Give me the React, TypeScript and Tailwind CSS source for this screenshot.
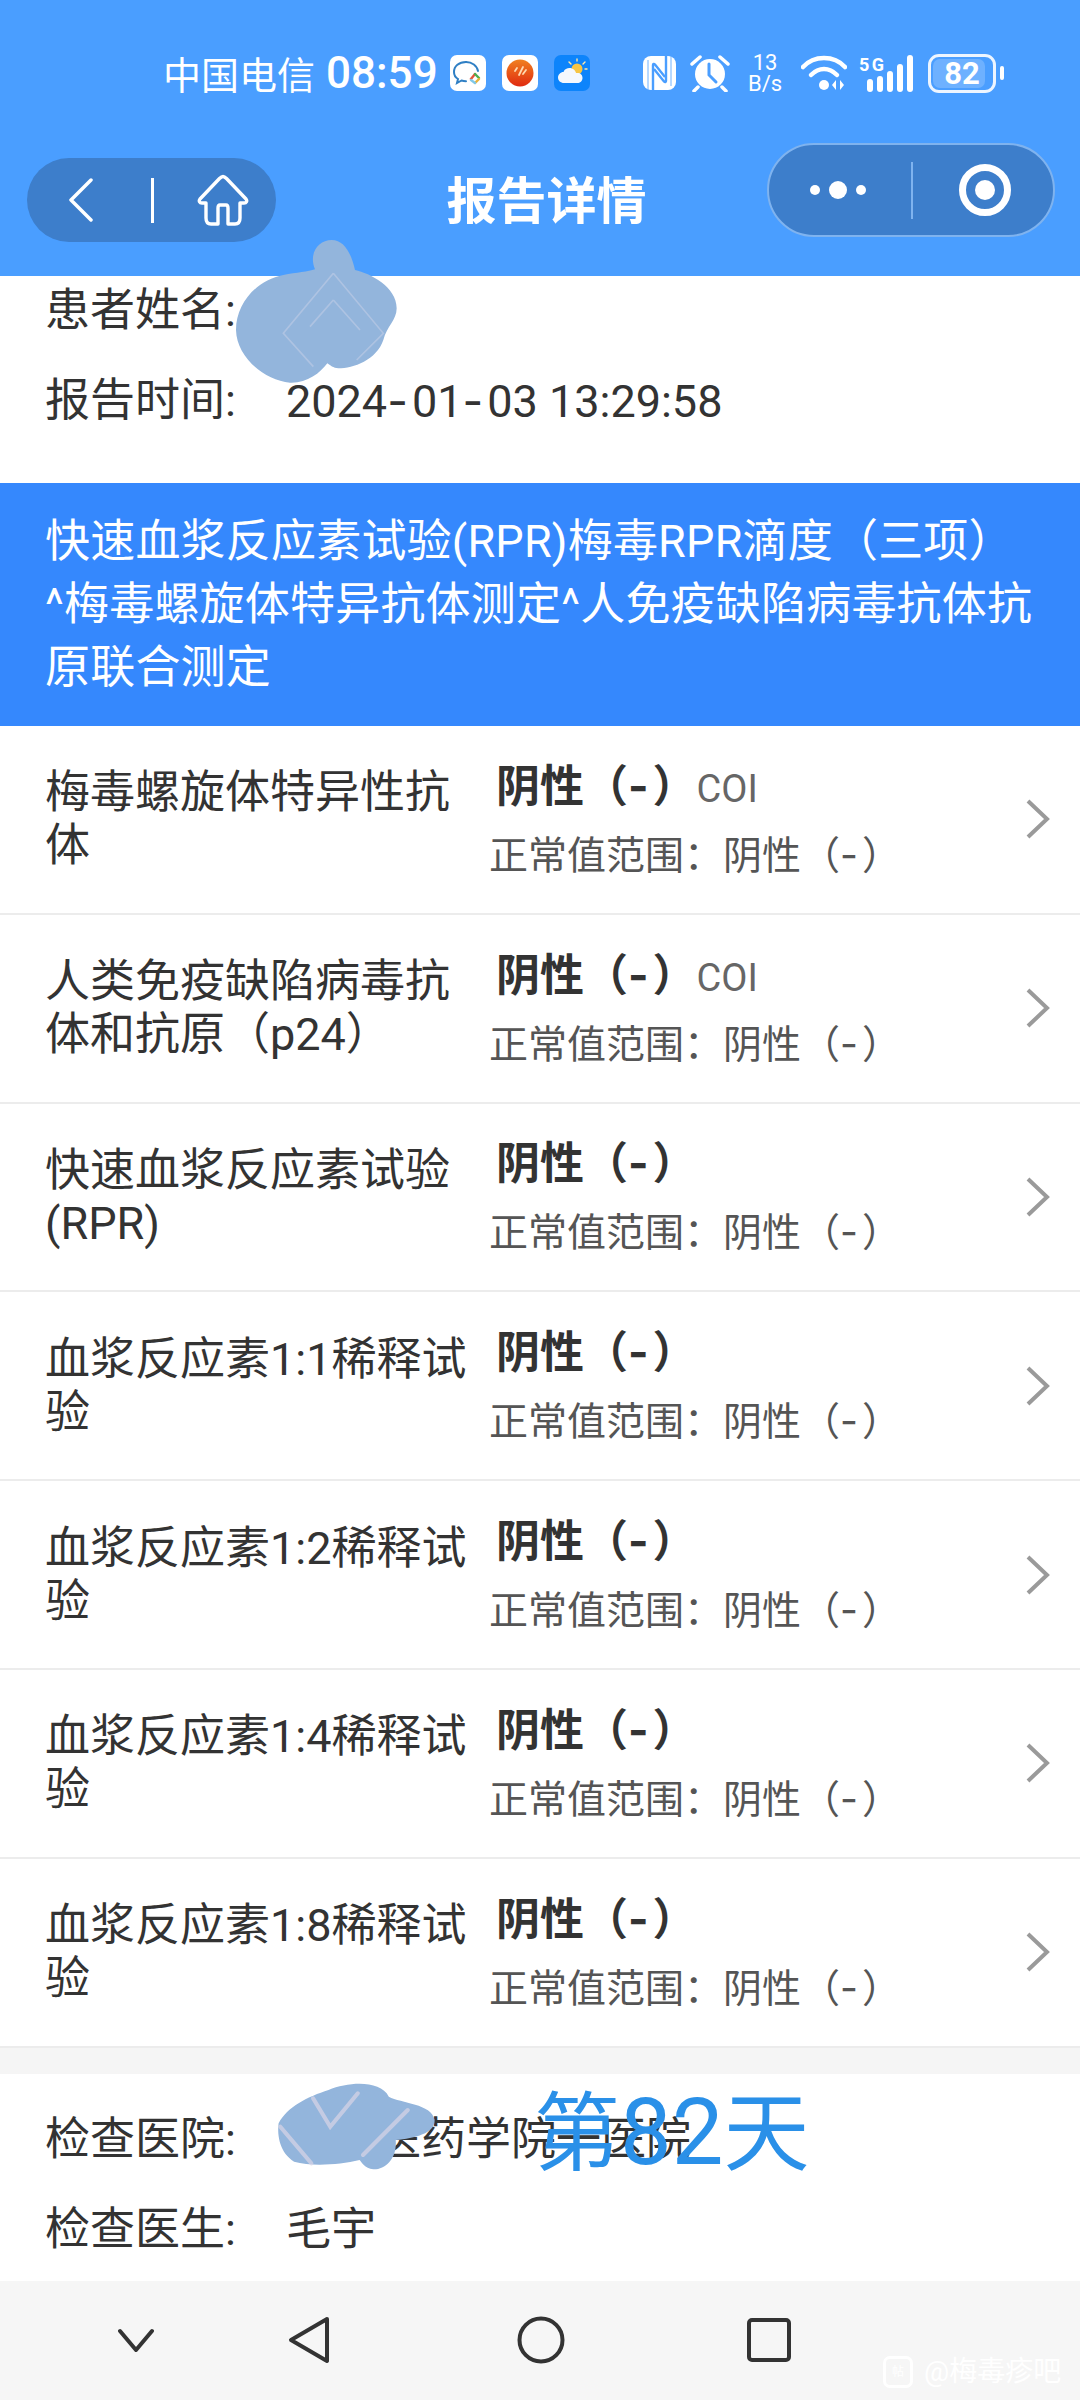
import React from "react";

const rows: { name: React.ReactNode; coi?: boolean }[] = [
  { name: "梅毒螺旋体特异性抗体", coi: true },
  { name: "人类免疫缺陷病毒抗体和抗原（p24）", coi: true },
  { name: "快速血浆反应素试验(RPR)" },
  { name: "血浆反应素1:1稀释试验" },
  { name: "血浆反应素1:2稀释试验" },
  { name: "血浆反应素1:4稀释试验" },
  { name: "血浆反应素1:8稀释试验" },
];

function MessageApp() {
  return (
    <svg viewBox="0 0 36 36" className="w-[36px] h-[36px] shrink-0">
      <rect width="36" height="36" rx="7" fill="#ffffff" />
      <path d="M16 7C9 7 4 11 4 17c0 3 1.500 5.500 4 7l-1 4 4.500-2.500c1.500.5 3 .7 4.500.7" fill="none" stroke="#2f7fc4" strokeWidth="2" strokeLinecap="round" />
      <path d="M16 7c6 0 11 3.500 12 9" fill="none" stroke="#2f7fc4" strokeWidth="2" strokeLinecap="round" />
      <path d="M21 24l4-5" stroke="#e2563d" strokeWidth="2.400" strokeLinecap="round" />
      <path d="M25 19l4 4" stroke="#4caf50" strokeWidth="2.400" strokeLinecap="round" />
      <path d="M29 24l-4 4" stroke="#e8b23a" strokeWidth="2.400" strokeLinecap="round" />
      <path d="M25 28l-4-3" stroke="#7fc8e8" strokeWidth="2.400" strokeLinecap="round" />
    </svg>
  );
}

function OrangeApp() {
  return (
    <svg viewBox="0 0 36 36" className="w-[36px] h-[36px] shrink-0">
      <defs>
        <linearGradient id="og" x1="0" y1="0" x2="0" y2="1">
          <stop offset="0" stopColor="#f08020" />
          <stop offset="1" stopColor="#e02a10" />
        </linearGradient>
      </defs>
      <rect width="36" height="36" rx="7" fill="#ffffff" />
      <circle cx="18" cy="18" r="13.500" fill="url(#og)" />
      <path d="M13 16l2-3M17 20l4-8M21 19l3-4" stroke="#ffd9b0" strokeWidth="1.800" strokeLinecap="round" />
    </svg>
  );
}

function WeatherApp() {
  return (
    <svg viewBox="0 0 36 36" className="w-[36px] h-[36px] shrink-0">
      <rect width="36" height="36" rx="7" fill="#0d84fb" />
      <circle cx="23" cy="14" r="5.500" fill="#f6c544" />
      <path d="M23 4v2M31 7l-2 2M33 14h-2M15 7l2 2" stroke="#ffe9a8" strokeWidth="1.400" strokeLinecap="round" />
      <path d="M10 28c-3.500 0-6-2.500-6-5.500 0-3 2.500-5.500 5.500-5.500 1-3 3.500-4 6-4 3.500 0 6 2.500 6.500 5 .5 0 1 0 1.500 0 3 0 5 2 5 5s-2.500 5-5 5z" fill="#f4f8fd" />
    </svg>
  );
}

function Nfc() {
  return (
    <svg viewBox="0 0 33 34" className="w-[33px] h-[34px] shrink-0 ml-[53px]">
      <rect width="33" height="34" rx="8" fill="#fff" />
      <path d="M10 34V9c0-1 1-1.500 2-.5L22 21" fill="none" stroke="#4a9eff" strokeWidth="2.400" />
      <path d="M23 0v25c0 1-1 1.500-2 .5L11 13" fill="none" stroke="#4a9eff" strokeWidth="2.400" />
      <path d="M5 34V4M28 30V0" stroke="#4a9eff" strokeWidth="0.800" />
    </svg>
  );
}

function Alarm() {
  return (
    <svg viewBox="0 0 40 38" className="w-[40px] h-[38px] shrink-0 ml-[14px]">
      <circle cx="20" cy="20" r="15" fill="#fff" />
      <path d="M19 10v11l7 7" fill="none" stroke="#4a9eff" strokeWidth="3" strokeLinecap="round" />
      <path d="M2 10L10 3M38 10L30 3M8 33l-4 4M32 33l4 4" stroke="#fff" strokeWidth="3.500" strokeLinecap="round" />
    </svg>
  );
}

function Wifi() {
  return (
    <svg viewBox="0 0 46 38" className="w-[46px] h-[38px] shrink-0 ml-[16px]">
      <path d="M2 13C13 1 33 1 44 13" fill="none" stroke="#fff" strokeWidth="4.500" strokeLinecap="round" />
      <path d="M10 21c8-8 18-8 26 0" fill="none" stroke="#fff" strokeWidth="4.500" strokeLinecap="round" />
      <circle cx="23" cy="31" r="5" fill="#fff" />
      <path d="M35 26v10l-4-5zM39 26v10l4-5z" fill="#fff" />
    </svg>
  );
}

function Signal() {
  return (
    <svg viewBox="0 0 56 40" className="w-[56px] h-[40px] shrink-0 ml-[12px]">
      <text x="0" y="18" fill="#fff" fontSize="18" fontWeight="700" fontFamily="Roboto, sans-serif" textLength="25">5G</text>
      <rect x="8" y="26" width="6" height="13" rx="3" fill="#fff" />
      <rect x="18" y="23" width="6" height="16" rx="3" fill="#fff" />
      <rect x="28" y="18" width="6" height="21" rx="3" fill="#fff" />
      <rect x="38" y="11" width="6" height="28" rx="3" fill="#fff" />
      <rect x="48" y="2" width="6" height="37" rx="3" fill="#fff" />
    </svg>
  );
}

function BackChevron() {
  return (
    <svg viewBox="0 0 24 44" className="w-[24px] h-[44px] shrink-0">
      <path d="M22 2L2 22l20 20" fill="none" stroke="#fff" strokeWidth="3.500" strokeLinecap="round" strokeLinejoin="round" />
    </svg>
  );
}

function Home() {
  return (
    <svg viewBox="0 0 52 52" className="w-[52px] h-[52px] shrink-0">
      <path d="M26 2.500c-1.500 0-2.500 1-3.500 2L3 25c-1.500 2-.5 4 2 4h4v15c0 4 2 6 5 6h7V34c0-2 1-3 2-3h6c1 0 2 1 2 3v16h7c3 0 5-2 5-6V29h4c2.500 0 3.500-2 2-4L29.500 4.500c-1-1-2-2-3.500-2z" fill="none" stroke="#fff" strokeWidth="3.400" strokeLinejoin="round" />
    </svg>
  );
}

function Chevron() {
  return (
    <svg viewBox="0 0 24 40" className="w-[24px] h-[40px] shrink-0">
      <path d="M2 2l19 18L2 38" fill="none" stroke="#9a9a9a" strokeWidth="4" />
    </svg>
  );
}

function Hy() {
  return <span className="font-['Inter',sans-serif] tracking-[4px]">-</span>;
}

export default function App() {
  return (
    <div className="relative w-[1080px] h-[2400px] overflow-hidden flex flex-col bg-white font-['Roboto','Noto_Sans_CJK_SC',sans-serif] text-[#333333]">
      <header className="h-[276px] shrink-0 bg-[#4a9eff] text-white flex flex-col pt-[53px]">
        <div className="h-[40px] flex items-center pl-[163px]">
          <span className="text-[38px] leading-[40px] w-[163px] shrink-0 whitespace-nowrap font-['Noto_Sans_CJK_SC',sans-serif]">中国电信</span>
          <span className="text-[44px] leading-[40px] w-[124px] shrink-0 whitespace-nowrap font-medium font-['Roboto',sans-serif]">08:59</span>
          <MessageApp />
          <span className="w-[16px] shrink-0" />
          <OrangeApp />
          <span className="w-[16px] shrink-0" />
          <WeatherApp />
          <Nfc />
          <Alarm />
          <div className="ml-[15px] w-[40px] shrink-0 flex flex-col items-center font-['Roboto',sans-serif] text-[22px] leading-[21px]">
            <span>13</span>
            <span>B/s</span>
          </div>
          <Wifi />
          <Signal />
          <div className="ml-[13px] w-[68px] h-[39px] shrink-0 rounded-[11px] border-[3px] border-white/90 flex p-[2px] relative">
            <div className="w-[52px] h-full rounded-[7px] bg-white/20" />
            <span className="absolute inset-0 flex items-center justify-center text-[31px] leading-none font-bold font-['Roboto',sans-serif] text-white">82</span>
          </div>
          <div className="ml-[4px] w-[4px] h-[14px] rounded-full bg-white shrink-0" />
        </div>
        <div className="mt-[50px] flex items-start">
          <div className="mt-[15px] ml-[27px] w-[249px] h-[84px] rounded-full bg-[#3d7ecb] flex items-center shrink-0">
            <div className="ml-[42px]"><BackChevron /></div>
            <div className="ml-[58px] w-[3px] h-[45px] bg-white" />
            <div className="ml-[43px]"><Home /></div>
          </div>
          <div className="flex-1 pl-[50px] pt-[19px] text-center text-[50px] leading-[70px] font-bold font-['Noto_Sans_CJK_SC',sans-serif]">报告详情</div>
          <div className="mr-[25px] w-[288px] h-[94px] shrink-0 rounded-full bg-[#3d7ecb] border-2 border-[#7fb3ef] flex items-center">
            <div className="ml-[41px] w-[10px] h-[10px] rounded-full bg-white" />
            <div className="ml-[9px] w-[18px] h-[18px] rounded-full bg-white" />
            <div className="ml-[9px] w-[10px] h-[10px] rounded-full bg-white" />
            <div className="ml-[45px] w-[2px] h-[57px] bg-[#7fb3ef]" />
            <div className="ml-[46px] w-[52px] h-[52px] rounded-full border-[7px] border-white flex items-center justify-center">
              <div className="w-[20px] h-[20px] rounded-full bg-white" />
            </div>
          </div>
        </div>
      </header>

      <section className="h-[207px] shrink-0 px-[45px] text-[45px] text-[#333333] flex flex-col">
        <div className="h-[70px] leading-[70px] whitespace-nowrap">患者姓名:</div>
        <div className="mt-[21px] h-[68px] leading-[68px] whitespace-nowrap flex">
          <span className="w-[241px] shrink-0">报告时间:</span>
          <span>2024<Hy />01<Hy />03 13:29:58</span>
        </div>
      </section>

      <section className="h-[243px] shrink-0 bg-[#3588fd] text-white pl-[45px] pr-[20px] pt-[27px] text-[45px] leading-[63px] tracking-[0.2px]">
        快速血浆反应素试验(RPR)梅毒RPR滴度（三项）
        <br />
        ^梅毒螺旋体特异抗体测定^人免疫缺陷病毒抗体抗原联合测定
      </section>

      <section className="shrink-0 flex flex-col">
        {rows.map((r, i) => (
          <div key={i} className="h-[188.800px] shrink-0 border-b-2 border-[#ececec] flex items-center pl-[45px]">
            <div className="w-[430px] shrink-0 text-[45px] leading-[53px] text-[#333333]">{r.name}</div>
            <div className="ml-[14px] w-[500px] shrink-0 flex flex-col gap-[9px] pt-[2px]">
              <div className="h-[60px] leading-[60px] whitespace-nowrap pl-[7px] flex items-baseline">
                <span className="text-[44px] font-bold text-[#333333]">阴性（<Hy />）</span>
                {r.coi && <span className="text-[38px] text-[#666666]">COI</span>}
              </div>
              <div className="h-[60px] leading-[60px] whitespace-nowrap text-[39px] text-[#555555]">正常值范围：阴性（<Hy />）</div>
            </div>
            <div className="ml-[37px]"><Chevron /></div>
          </div>
        ))}
      </section>

      <div className="h-[26px] shrink-0 bg-[#f5f5f5]" />

      <section className="h-[207px] shrink-0 px-[45px] pt-[36px] text-[45px] text-[#333333] flex flex-col gap-[30px]">
        <div className="h-[60px] leading-[60px] whitespace-nowrap flex">
          <span className="w-[241px] shrink-0">检查医院:</span>
          <span>某某医药学院一医院</span>
        </div>
        <div className="h-[60px] leading-[60px] whitespace-nowrap flex">
          <span className="w-[241px] shrink-0">检查医生:</span>
          <span>毛宇</span>
        </div>
      </section>

      <nav className="flex-1 bg-[#f6f6f6] flex items-center pl-[118px]">
        <svg viewBox="0 0 36 24" className="w-[36px] h-[24px] shrink-0">
          <path d="M2 3l16 19L34 3" fill="none" stroke="#333" strokeWidth="4" strokeLinecap="round" strokeLinejoin="round" />
        </svg>
        <svg viewBox="0 0 42 48" className="ml-[134px] w-[42px] h-[48px] shrink-0">
          <path d="M39 3L3 24l36 21z" fill="none" stroke="#333" strokeWidth="4" strokeLinejoin="round" />
        </svg>
        <svg viewBox="0 0 48 48" className="ml-[187px] w-[48px] h-[48px] shrink-0">
          <circle cx="24" cy="24" r="21.500" fill="none" stroke="#333" strokeWidth="4" />
        </svg>
        <svg viewBox="0 0 44 44" className="ml-[182px] w-[44px] h-[44px] shrink-0">
          <rect x="2" y="2" width="40" height="40" rx="3" fill="none" stroke="#333" strokeWidth="4" />
        </svg>
      </nav>

      {/* redaction scribbles and photo-editor overlays */}
      <svg viewBox="0 0 600 510" className="absolute left-[220px] top-[230px] w-[200px] h-[170px]">
        <path d="M285 118C265 70 295 30 335 30C375 30 395 75 405 120C450 130 530 170 530 235C530 270 500 290 490 330C470 390 400 415 355 415C340 415 330 405 322 400C300 430 260 460 210 458C130 450 50 380 48 300C48 220 110 150 190 135C230 128 265 125 285 118Z" fill="#93b5dc" />
        <path d="M340 130L190 310L280 410M340 130L490 310L410 390M340 210L270 290M340 210L420 300" fill="none" stroke="#aec3e2" strokeWidth="5" />
      </svg>
      <svg viewBox="0 0 1568 300" preserveAspectRatio="none" className="absolute left-[270px] top-[2080px] w-[540px] h-[100px]">
        <path d="M25 130C50 80 110 50 170 30C230 5 320 0 345 50C380 70 470 70 478 120C480 160 420 175 365 180C370 240 330 270 300 268C275 265 265 245 260 240C200 255 120 260 70 245C30 220 20 170 25 130Z" fill="#93b5dc" />
        <path d="M125 55L175 140L255 40M30 140L120 250M270 225L400 90" fill="none" stroke="#d8d4e6" strokeWidth="12" strokeLinecap="round" opacity="0.7" />
      </svg>
      <div className="absolute left-[534px] top-[2072px] text-[86px] leading-[110px] text-[#2a90e8] whitespace-nowrap font-['Noto_Sans_CJK_SC',sans-serif]">
        第<span className="text-[92px] font-['Roboto',sans-serif]">82</span>天
      </div>
      <div className="absolute left-[883px] top-[2355px] flex items-center gap-[11px] text-white">
        <div className="w-[30px] h-[32px] rounded-[7px] border-[3px] border-white flex items-center justify-center text-[12px] leading-none">帖</div>
        <span className="text-[28px] leading-[34px] whitespace-nowrap">@梅毒疹吧</span>
      </div>
    </div>
  );
}
